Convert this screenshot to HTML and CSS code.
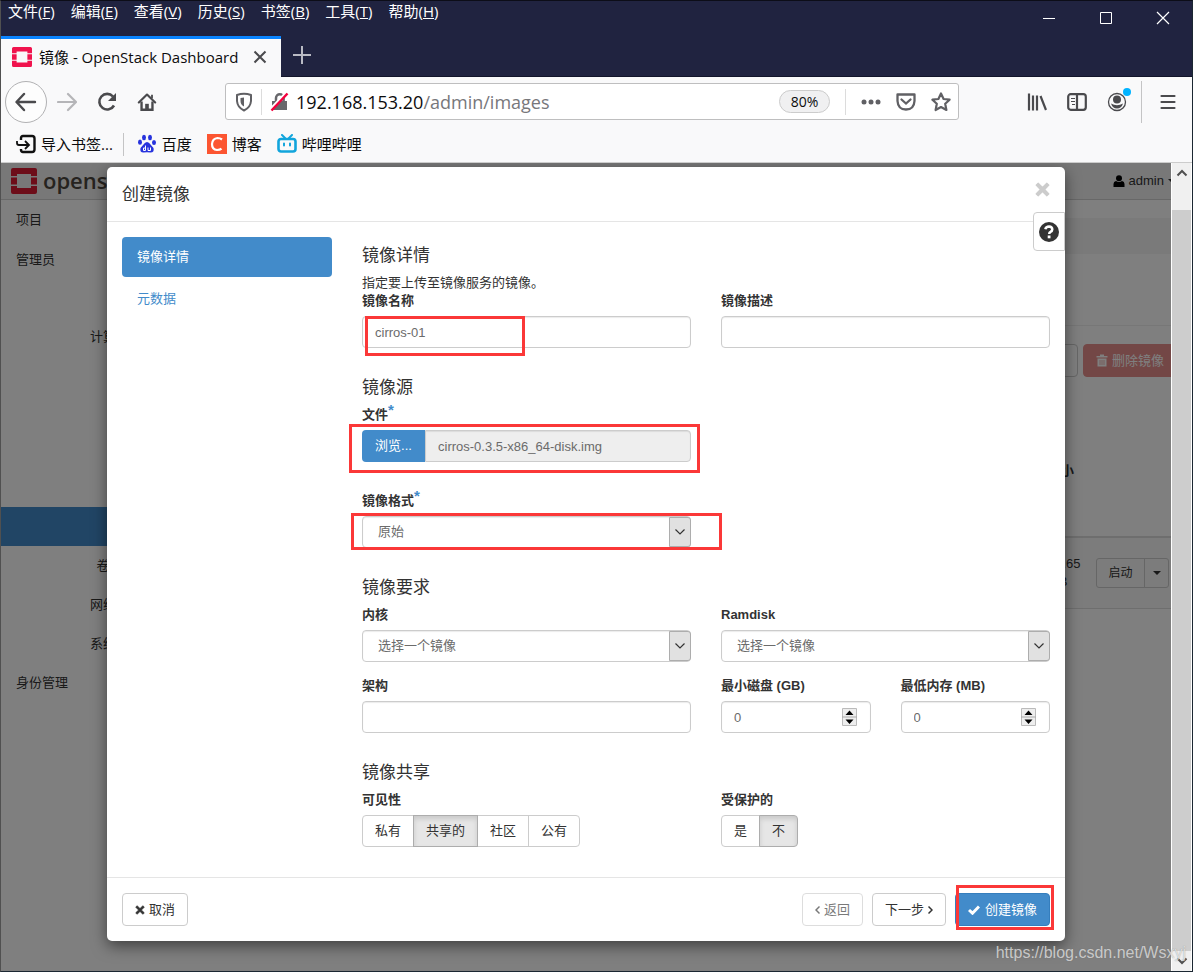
FILE: index.html
```html
<!DOCTYPE html>
<html lang="zh-CN">
<head>
<meta charset="utf-8">
<title>镜像 - OpenStack Dashboard</title>
<link rel="stylesheet" href="styles.css">
</head>
<body>
<svg width="0" height="0" class="defs" aria-hidden="true">
  <symbol id="times" viewBox="0 0 14 14"><path d="M3 1 L7 5 L11 1 L13 3 L9 7 L13 11 L11 13 L7 9 L3 13 L1 11 L5 7 L1 3 Z" fill="currentColor" stroke="currentColor" stroke-width="1" stroke-linejoin="round"/></symbol>
  <symbol id="down" viewBox="0 0 12 8"><path d="M1.500 1.500 L6 6 L10.500 1.500" fill="none" stroke="currentColor" stroke-width="1.200"/></symbol>
  <symbol id="logo" viewBox="0 0 26 26"><path d="M2 0H24Q26 0 26 2V8H20V6H6V8H0V2Q0 0 2 0ZM0 9.500H6V16.500H0ZM20 9.500H26V16.500H20ZM0 18H6V20H20V18H26V24Q26 26 24 26H2Q0 26 0 24Z" fill="currentColor"/></symbol>
</svg>
<header class="chrome">
  <div class="titlebar">
    <nav class="menus">
      <button>文件(<u>F</u>)</button><button>编辑(<u>E</u>)</button><button>查看(<u>V</u>)</button><button>历史(<u>S</u>)</button><button>书签(<u>B</u>)</button><button>工具(<u>T</u>)</button><button>帮助(<u>H</u>)</button>
    </nav>
    <div class="wincontrols">
      <button aria-label="最小化"><svg width="14" height="14"><path d="M1 7.500H13" stroke="#fff"/></svg></button>
      <button aria-label="最大化"><svg width="14" height="14"><path d="M1.500 1.500H12.500V12.500H1.500Z" stroke="#fff" fill="none"/></svg></button>
      <button aria-label="关闭"><svg width="14" height="14"><path d="M1 1L13 13M13 1L1 13" stroke="#fff" stroke-width="1.200"/></svg></button>
    </div>
  </div>
  <div class="tabs">
    <div class="tab">
      <svg class="favicon" width="20" height="20"><use href="#logo"/></svg>
      <span class="tabtitle">镜像 - OpenStack Dashboard</span>
      <button aria-label="关闭标签页"><svg width="14" height="14"><path d="M1.500 1.500L12.500 12.500M12.500 1.500L1.500 12.500" stroke="#4a4a4d" stroke-width="2"/></svg></button>
    </div>
    <button class="newtab" aria-label="新标签页"><svg width="18" height="18"><path d="M9 0V18M0 9H18" stroke="#b9bac4" stroke-width="2"/></svg></button>
  </div>
  <div class="navbar">
    <button class="back" aria-label="后退"><svg width="22" height="20" viewBox="0 0 22 20" fill="none" stroke="#4a4a4d" stroke-width="2.400"><path d="M20 10H2M9 2L1.500 10L9 18" stroke-linecap="round" stroke-linejoin="round"/></svg></button>
    <button class="fwd" aria-label="前进"><svg width="20" height="20" fill="none" stroke="#b5b5b8" stroke-width="2.200"><path d="M1 10H18M11 2L19 10L11 18" stroke-linecap="round" stroke-linejoin="round"/></svg></button>
    <button aria-label="刷新"><svg width="20" height="20" fill="none" stroke="#4a4a4d" stroke-width="2.600"><path d="M16 4.500A7.800 7.800 0 1 0 17 13.500"/><path d="M19 1V9H11Z" fill="#4a4a4d" stroke="none"/></svg></button>
    <button aria-label="主页"><svg width="20" height="20" viewBox="0 0 22 20" fill="none" stroke="#4a4a4d"><path d="M2 10.500L11 1.800L20 10.500" stroke-width="2.400" stroke-linecap="round" stroke-linejoin="round"/><path d="M5 9.500V18.500H17V9.500" stroke-width="2.600"/><path d="M11 19V12" stroke-width="4"/><path d="M16.500 2V6" stroke-width="2"/></svg></button>
    <div class="urlbar">
      <svg class="shield" width="18" height="20" fill="none" stroke="#606064" stroke-width="2"><path d="M2 3Q9 0.500 16 3V9Q15.500 15.500 9 18.500Q2.500 15.500 2 9Z" stroke-linejoin="round"/><path d="M9 5.500V14.500Q5.500 12.500 5.500 9V6Z" fill="#606064" stroke="none"/></svg>
      <span class="urlsep"></span>
      <svg class="lock" width="20" height="20"><path d="M2 9H17V18H2Z" fill="#68686c"/><path d="M6 10V6A3.800 3.800 0 0 1 13.600 6V10" stroke="#68686c" stroke-width="2.500" fill="none"/><path d="M0 18L16 1" stroke="#fff" stroke-width="3"/><path d="M1.500 18.500L17.500 1.500" stroke="#f4003d" stroke-width="2.400"/></svg>
      <span class="url"><b>192.168.153.20</b>/admin/images</span>
      <button class="zoom">80%</button>
      <span class="urlsep"></span>
      <svg class="dots" width="22" height="20" fill="#606064"><circle cx="4" cy="10" r="2.500"/><circle cx="11" cy="10" r="2.500"/><circle cx="18" cy="10" r="2.500"/></svg>
      <svg width="20" height="20" fill="none" stroke="#606064" stroke-width="2.300"><path d="M1.500 2.500H18.500V9Q18 17.500 10 17.500Q2 17.500 1.500 9Z" stroke-linejoin="round"/><path d="M5.500 7.500L10 11.500L14.500 7.500" stroke-linecap="round"/></svg>
      <svg width="20" height="20" fill="none" stroke="#606064" stroke-width="2.200"><path d="M10 1.500L12.600 7L18.600 7.700L14.200 11.800L15.400 18L10 15L4.600 18L5.800 11.800L1.400 7.700L7.400 7Z" stroke-linejoin="round"/></svg>
    </div>
    <div class="tools">
      <button aria-label="书库"><svg width="20" height="20" stroke="#4a4a4d" stroke-width="2" fill="none"><path d="M2 1.500V18.500M6 3.500V18.500M10 3.500V18.500M13.500 4L19 18" stroke-width="2.200"/></svg></button>
      <button aria-label="侧栏"><svg width="20" height="20" stroke="#4a4a4d" stroke-width="2.200" fill="none"><rect x="1.200" y="2.200" width="17.600" height="15.600" rx="2.500"/><path d="M10 2V18"/><path d="M4 6.500H8M4 9.500H8M5 12.500H8" stroke-width="1"/></svg></button>
      <button class="account" aria-label="账户"><svg width="24" height="24"><circle cx="10" cy="14" r="8.500" fill="none" stroke="#4a4a4d" stroke-width="1.300"/><circle cx="10" cy="11.500" r="4" fill="#4a4a4d"/><path d="M4 15.500Q10 19 16 15.500Q14.500 20.500 10 20.500Q5.500 20.500 4 15.500Z" fill="#4a4a4d"/><circle cx="20" cy="4" r="4" fill="#00b3ff"/></svg></button>
      <span class="toolsep"></span>
      <button aria-label="菜单"><svg width="20" height="20" stroke="#4a4a4d" stroke-width="2.200" stroke-linecap="round"><path d="M3.500 4H16.500M3.500 10H16.500M3.500 16H16.500"/></svg></button>
    </div>
  </div>
  <nav class="bookmarks">
    <a href="#"><svg width="20" height="20" fill="none" stroke="#111" stroke-width="2.400"><path d="M5 6V4Q5 2 7 2H16Q18.500 2 18.500 4.500V15.500Q18.500 18 16 18H7Q5 18 5 16V15"/><path d="M1 7V9Q1 11 3 11H12M9 7L13 11L9 15" stroke-width="1.800"/></svg>导入书签...</a>
    <span class="bmsep"></span>
    <a href="#"><svg class="baidu" width="20" height="20" fill="#2733dd"><ellipse cx="7" cy="3.500" rx="2" ry="2.700"/><ellipse cx="13" cy="3.500" rx="2" ry="2.700"/><ellipse cx="3" cy="8.200" rx="2" ry="2.600"/><ellipse cx="17" cy="8.500" rx="2" ry="2.600"/><path d="M10 8Q12 8 13.500 10.500L16.500 14Q17.500 18.500 13.500 18.500Q10 17.800 6.500 18.500Q2.500 18.500 3.500 14L6.500 10.500Q8 8 10 8Z"/><path d="M8.500 11.500V16.500H6.500V14H8.500M11 13.500V16.500H13.500V13.500" stroke="#fff" fill="none"/></svg>百度</a>
    <a href="#"><svg width="20" height="20"><path d="M0 0H20V20H0Z" fill="#fc5531"/><path d="M15 5.500Q13 4 10.500 4Q5.500 4.500 5 10Q5 15.500 10 16Q13 16 14.500 14.700" fill="none" stroke="#fff" stroke-width="2.200"/></svg>博客</a>
    <a href="#"><svg width="20" height="20" fill="none" stroke="#12a5dc" stroke-width="2.600"><rect x="1.500" y="5" width="17" height="12.500" rx="2.500"/><path d="M5 1L8 4M15 1L12 4M7 9.500V11.500M13 9.500V11.500" stroke-linecap="round" stroke-width="2"/></svg>哔哩哔哩</a>
  </nav>
</header>
<div class="viewport">
  <div class="content">
    <div class="page">
      <header class="topbar">
        <a class="brand" href="#"><svg width="26" height="26"><use href="#logo"/></svg><span>openstack</span></a>
        <a class="user" href="#"><svg width="12" height="12"><circle cx="6" cy="3.200" r="3"/><path d="M0.500 12V9Q0.500 6.500 3 6Q6 8 9 6Q11.500 6.500 11.500 9V12Z"/></svg>admin<i class="caret"></i></a>
      </header>
      <div class="below">
        <nav class="sidebar">
          <a href="#">项目</a>
          <a href="#">管理员</a>
          <a class="sub first" href="#">计算</a>
          <span class="current"></span>
          <a class="sub" href="#">卷</a>
          <a class="sub" href="#">网络</a>
          <a class="sub" href="#">系统</a>
          <a href="#">身份管理</a>
        </nav>
        <main class="main">
          <div class="crumbs"></div>
          <div class="pagehead"></div>
          <div class="actions">
            <button class="btn">创建镜像</button>
            <button class="btn danger"><svg width="12" height="13"><path d="M0.500 2H4V0.500H8V2H11.500V3.500H0.500ZM1.500 4.500H10.500V12.500H1.500Z" fill="#fff"/><path d="M4 6V11M6 6V11M8 6V11" stroke="#e68f8d"/></svg>删除镜像</button>
          </div>
          <table class="images">
            <thead><tr><th></th><th class="size">大小</th><th class="act"></th></tr></thead>
            <tbody><tr><td></td><td class="size">12.65 MB</td><td class="act"><div class="group"><button class="mini">启动</button><button class="mini arrow" aria-label="更多"><i class="caret"></i></button></div></td></tr></tbody>
          </table>
        </main>
      </div>
    </div>
    <div class="backdrop">
      <section class="modal" role="dialog" aria-labelledby="dlg">
        <header class="mhead">
          <h1 id="dlg">创建镜像</h1>
          <button class="close" aria-label="关闭对话框"><svg width="15" height="15"><use href="#times"/></svg></button>
        </header>
        <button class="help" aria-label="帮助"><svg width="20" height="20"><circle cx="10" cy="10" r="10" fill="#333"/><path d="M6.300 7.200Q7 4.500 10 4.500Q13.300 4.700 13.300 7.400Q13.200 9 11.500 9.800Q10.200 10.400 10.200 12" fill="none" stroke="#fff" stroke-width="2.500"/><path d="M8.700 13.500H11.500V16.300H8.700Z" fill="#fff"/></svg></button>
        <div class="mbody">
          <nav class="steps">
            <a class="on" href="#">镜像详情</a>
            <a href="#">元数据</a>
          </nav>
          <form class="form">
            <section>
              <h2>镜像详情</h2>
              <p>指定要上传至镜像服务的镜像。</p>
              <div class="cols">
                <div class="field"><label for="name">镜像名称</label><input id="name" type="text" value="cirros-01"><i class="mark m1"></i></div>
                <div class="field"><label for="desc">镜像描述</label><input id="desc" type="text"></div>
              </div>
            </section>
            <section>
              <h2>镜像源</h2>
              <div class="cols sources">
                <div class="field"><label for="file">文件<sup>*</sup></label><div class="filebox"><button type="button">浏览...</button><input id="file" type="text" readonly value="cirros-0.3.5-x86_64-disk.img"></div><i class="mark m2"></i></div>
                <div class="field start"><label for="fmt">镜像格式<sup>*</sup></label><div class="selbox"><select id="fmt"><option>原始</option></select><i class="selarrow"><svg width="12" height="8"><use href="#down"/></svg></i></div><i class="mark m3"></i></div>
              </div>
            </section>
            <section>
              <h2>镜像要求</h2>
              <div class="cols">
                <div class="field"><label for="kernel">内核</label><div class="selbox"><select id="kernel"><option>选择一个镜像</option></select><i class="selarrow"><svg width="12" height="8"><use href="#down"/></svg></i></div></div>
                <div class="field"><label for="ram">Ramdisk</label><div class="selbox"><select id="ram"><option>选择一个镜像</option></select><i class="selarrow"><svg width="12" height="8"><use href="#down"/></svg></i></div></div>
                <div class="field"><label for="arch">架构</label><input id="arch" type="text"></div>
                <div class="cols">
                  <div class="field"><label for="disk">最小磁盘 (GB)</label><div class="selbox"><input id="disk" type="number" value="0"><svg class="spin" width="15" height="18"><path d="M0.500 0.500H14.500V17.500H0.500Z" fill="#eee" stroke="#bbb"/><path d="M0 9H15" stroke="#aaa"/><path d="M3.500 7H11.500L7.500 2.500ZM3.500 11.500H11.500L7.500 16Z" fill="#000"/></svg></div></div>
                  <div class="field"><label for="mem">最低内存 (MB)</label><div class="selbox"><input id="mem" type="number" value="0"><svg class="spin" width="15" height="18"><path d="M0.500 0.500H14.500V17.500H0.500Z" fill="#eee" stroke="#bbb"/><path d="M0 9H15" stroke="#aaa"/><path d="M3.500 7H11.500L7.500 2.500ZM3.500 11.500H11.500L7.500 16Z" fill="#000"/></svg></div></div>
                </div>
              </div>
            </section>
            <section>
              <h2>镜像共享</h2>
              <div class="cols">
                <fieldset class="field"><legend>可见性</legend><div class="radios"><label><input type="radio" name="vis">私有</label><label><input type="radio" name="vis" checked>共享的</label><label><input type="radio" name="vis">社区</label><label><input type="radio" name="vis">公有</label></div></fieldset>
                <fieldset class="field"><legend>受保护的</legend><div class="radios"><label><input type="radio" name="prot">是</label><label><input type="radio" name="prot" checked>不</label></div></fieldset>
              </div>
            </section>
          </form>
        </div>
        <footer class="mfoot">
          <button class="btn cancel"><svg width="10" height="10"><use href="#times"/></svg>取消</button>
          <button class="btn" disabled><svg width="5" height="10" fill="none" stroke="#333" stroke-width="1.500"><path d="M4.500 1.500L1 5L4.500 8.500"/></svg>返回</button>
          <button class="btn">下一步<svg width="5" height="10" fill="none" stroke="#333" stroke-width="1.500"><path d="M0.500 1.500L4 5L0.500 8.500"/></svg></button>
          <div class="final"><button class="btn primary"><svg width="12" height="10" fill="none" stroke="#fff" stroke-width="3"><path d="M1 5L4.500 8.200L11 1.500"/></svg>创建镜像</button><i class="mark m4"></i></div>
        </footer>
      </section>
    </div>
  </div>
  <div class="scrollbar">
    <button aria-label="向上滚动"><svg width="12" height="8"><path d="M1.500 6.500L6 2L10.500 6.500" fill="none" stroke="#505050" stroke-width="2"/></svg></button>
    <span class="thumb"></span>
    <button aria-label="向下滚动"><svg width="12" height="8"><path d="M1.500 1.500L6 6L10.500 1.500" fill="none" stroke="#505050" stroke-width="2"/></svg></button>
  </div>
  <span class="watermark">https://blog.csdn.net/Wsxyj</span>
</div>
</body>
</html>
```
FILE: styles.css
```css
* { box-sizing: border-box; }
body {
  margin: 0; height: 100vh; display: flex; flex-direction: column; overflow: hidden;
  border: 1px solid #1b2732; border-left-color: #505050; border-top-color: #0c0d18;
  font: 13px/18px "Liberation Sans", "Noto Sans CJK SC", sans-serif; color: #333; background: #fff;
}
button { font: inherit; color: inherit; background: none; border: 0; padding: 0; display: flex; align-items: center; justify-content: center; }
a { color: inherit; text-decoration: none; }
svg { flex: none; display: block; }
.defs { position: absolute; }
h1, h2, p { margin: 0; font-weight: normal; }

/* browser chrome */
.chrome { flex: none; font: 15px/20px "Open Sans", "Noto Sans CJK SC", sans-serif; color: #0c0c0d; background: #f9f9fa; border-bottom: 1px solid #ccc; }
.titlebar { display: flex; justify-content: space-between; height: 35px; background: #202340; color: #fff; }
.menus { display: flex; align-items: flex-start; gap: 16px; padding: 0 7px; }
.wincontrols { display: flex; gap: 43px; padding: 0 22px 2px; }
.tabs { display: flex; height: 41px; background: #202340; border-bottom: 1px solid #12142a; }
.tab { display: flex; align-items: center; width: 280px; height: 41px; padding: 0 14px 3px 11px; gap: 7px; background: #f9f9fa; border-top: 3px solid #0a84ff; }
.favicon { color: #f0134d; }
.tabtitle { flex: 1; white-space: nowrap; }
.newtab { width: 42px; padding-bottom: 3px; }
.navbar { display: flex; align-items: center; height: 49px; padding: 0 14px 0 4px; gap: 20px; }
.back { width: 42px; height: 42px; border: 1px solid #b1b1b3; border-radius: 50%; background: #fdfdfd; }
.fwd { margin-left: -10px; }
.urlbar { flex: 1; display: flex; align-items: center; height: 37px; margin: 0 48px; padding: 0 7px 0 9px; gap: 15px; border: 1px solid #bebebf; border-radius: 3px; background: #fff; }
.urlsep { width: 1px; height: 26px; background: #dcdcdc; }
.shield { margin-right: -7px; }
.lock { margin: 0 -9px 0 -7px; }
.url { flex: 1; font-size: 18px; line-height: 24px; color: #77777b; }
.url b { font-weight: normal; color: #0c0c0d; }
.zoom { width: 51px; height: 23px; font-size: 14px; border: 1px solid #ccc; border-radius: 12px; background: #f0f0f1; }
.dots { margin: 0 -1px; }
.tools { display: flex; align-items: center; gap: 20px; }
.account { width: 20px; padding: 0 0 4px 4px; }
.toolsep { width: 1px; height: 42px; background: #c4c4c5; margin: 0 -4px 0 -6px; }
.bookmarks { display: flex; align-items: center; height: 36px; padding: 0 15px; gap: 15px; }
.bookmarks a { display: flex; align-items: center; gap: 5px; }
.bmsep { width: 1px; height: 23px; background: #c4c4c5; margin: 0 -2px 0 -5px; }

/* dashboard page */
.viewport { position: relative; flex: 1; min-height: 0; display: flex; }
.content { position: relative; flex: 1; min-width: 0; overflow: hidden; }
.page { width: calc(100% + 6px); }
.topbar { display: flex; justify-content: space-between; align-items: center; height: 37px; padding: 0 1px 0 10px; background: #f0f0f0; border-bottom: 1px solid #d0d0d0; }
.brand { display: flex; align-items: center; gap: 6px; color: #da1a32; font: 600 22px/26px "Open Sans", sans-serif; }
.brand span { width: 66px; overflow: hidden; color: #4d463e; padding-bottom: 3px; }
.user { display: flex; align-items: center; gap: 4px; }
.caret { border: 4px solid transparent; border-top-color: #333; border-bottom: 0; }
.below { display: flex; }
.sidebar { width: 204px; flex: none; display: flex; flex-direction: column; }
.sidebar a { padding: 11px 15px; }
.sidebar .sub { padding: 11px 15px 10px; text-align: center; }
.sidebar .first { margin: 37px 0 151px; }
.current { height: 39px; background: #428bca; }
.main { flex: 1; min-width: 0; padding-top: 18px; }
.crumbs { height: 36px; background: #f5f5f5; }
.pagehead { height: 72px; border-bottom: 1px solid #eee; }
.actions { display: flex; justify-content: flex-end; gap: 5px; padding: 18px 0 28px; }
.btn { height: 33px; padding: 0 12px; gap: 4px; border: 1px solid #ccc; border-radius: 4px; background: #fff; white-space: nowrap; }
.danger { background: #d9534f; border-color: #d9534f; color: #fff; opacity: .65; }
.images { width: 100%; border-collapse: collapse; table-layout: fixed; }
.images th { height: 132px; border-bottom: 2px solid #ddd; padding: 8px; text-align: left; }
.images td { height: 71px; border-bottom: 1px solid #ddd; padding: 8px; background: #f9f9f9; }
.images .size { width: 48px; padding-right: 0; }
.images .act { width: 89px; }
.group { display: flex; }
.mini { width: 49px; height: 30px; border: 1px solid #ccc; border-radius: 3px 0 0 3px; font-size: 12px; }
.mini.arrow { width: 25px; margin-left: -1px; border-radius: 0 3px 3px 0; }

/* modal */
.backdrop { position: absolute; inset: 0; padding-top: 4px; background: rgba(0, 0, 0, .5); }
.modal { position: relative; max-width: 958px; margin: 0 auto; background: #fff; border-radius: 5px; box-shadow: 0 5px 15px rgba(0, 0, 0, .5); }
.mhead { display: flex; justify-content: space-between; align-items: center; height: 55px; padding: 0 15px; border-bottom: 1px solid #e5e5e5; }
h1, h2 { font-size: 17px; line-height: 37px; }
.close { color: #ccc; padding-bottom: 9px; }
.help { position: absolute; top: 45px; right: 0; width: 32px; height: 39px; border: 1px solid #ccc; border-radius: 4px 0 0 4px; background: #fff; }
.mbody { display: flex; gap: 30px; padding: 15px 15px 30px; }
.steps { width: 210px; flex: none; display: flex; flex-direction: column; gap: 2px; }
.steps a { padding: 11px 15px; color: #428bca; border-radius: 4px; }
.steps .on { background: #428bca; color: #fff; }
.form { flex: 1; min-width: 0; display: flex; flex-direction: column; gap: 21px; }
.cols { display: grid; grid-template-columns: 1fr 1fr; gap: 15px 30px; }
.sources { row-gap: 30px; }
.start { grid-column: 1; }
.field { position: relative; display: flex; flex-direction: column; gap: 6px; min-width: 0; margin: 0; padding: 0; border: 0; }
.field > label, legend { font-weight: bold; height: 18px; padding: 0; white-space: nowrap; }
legend { margin-bottom: 6px; }
sup { color: #428bca; font-size: 15px; line-height: 0; vertical-align: 4px; }
.field input, select {
  width: 100%; height: 32px; padding: 0 12px; font: inherit; color: #6b6b6b; background: #fff;
  border: 1px solid #ccc; border-radius: 4px; box-shadow: inset 0 1px 1px rgba(0, 0, 0, .08); appearance: none;
}
select { padding-left: 15px; }
input[type="number"] { appearance: textfield; }
.filebox { display: flex; }
.filebox button { flex: none; width: 63px; background: #428bca; color: #fff; border-radius: 4px 0 0 4px; }
.filebox input { background: #eee; border-radius: 0 4px 4px 0; }
.selbox { position: relative; }
.selarrow { position: absolute; top: 1px; right: 0; bottom: 1px; width: 22px; display: flex; align-items: center; justify-content: center; background: #e1e1e1; border: 1px solid #adadad; border-radius: 0 3px 3px 0; pointer-events: none; }
.spin { position: absolute; top: 7px; right: 14px; pointer-events: none; }
.radios { display: flex; }
.radios label { position: relative; height: 32px; line-height: 30px; padding: 0 12px; border: 1px solid #ccc; margin-left: -1px; }
.radios label:first-child { margin-left: 0; border-radius: 4px 0 0 4px; }
.radios label:last-child { border-radius: 0 4px 4px 0; }
.radios label:has(:checked) { background: #e6e6e6; border-color: #adadad; box-shadow: inset 0 3px 5px rgba(0, 0, 0, .125); z-index: 1; }
.radios input { position: absolute; inset: 0; height: 100%; opacity: 0; margin: 0; }
.mfoot { display: flex; gap: 9px; padding: 15px; border-top: 1px solid #e5e5e5; }
.cancel { margin-right: auto; }
.btn:disabled { opacity: .65; }
.final { position: relative; }
.primary { background: #428bca; border-color: #357ebd; color: #fff; gap: 5px; }

/* red annotation frames drawn over the form */
.mark { position: absolute; border: 3px solid #fb3838; pointer-events: none; z-index: 2; }
.m1 { left: 3px; top: 24px; width: 160px; height: 40px; }
.m2 { left: -13px; right: -9px; top: 18px; height: 49px; }
.m3 { left: -11px; right: -31px; top: 21px; height: 37px; }
.m4 { left: 1px; right: -4px; top: -8px; height: 45px; }

.scrollbar { width: 21px; flex: none; display: flex; flex-direction: column; background: #f0f0f0; border: 1px solid #fff; border-width: 0 1px; }
.scrollbar button { height: 20px; }
.thumb { flex: 1; margin-top: 27px; background: #cdcdcd; }
.watermark { position: absolute; right: 6px; bottom: 8px; font-size: 16px; line-height: 20px; color: rgba(255, 255, 255, .65); text-shadow: 0 0 1px rgba(90, 90, 90, .6); }
```
